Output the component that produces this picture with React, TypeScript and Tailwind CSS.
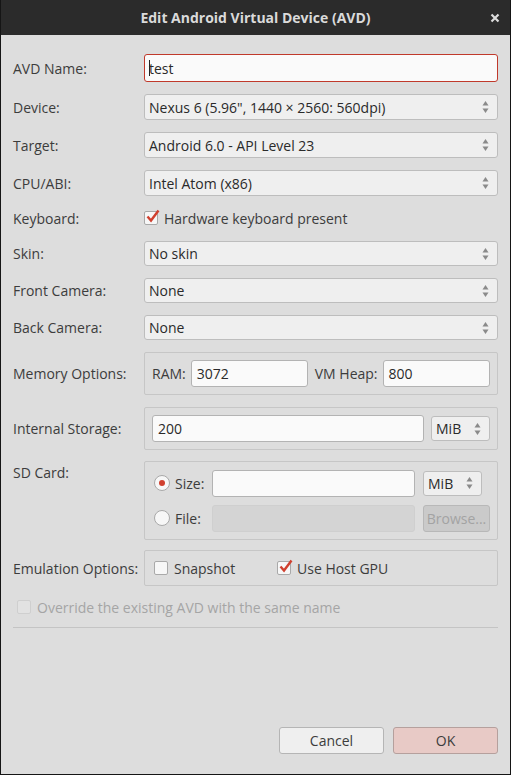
import React from "react";

const font = { fontFamily: '"Open Sans", "Noto Sans", sans-serif' };

function Arrows() {
  return (
    <svg width="7" height="14" viewBox="0 0 7 14" className="shrink-0">
      <path d="M3.5 1 L6.5 5.5 L0.5 5.5 Z" fill="#8a8a8a" />
      <path d="M3.5 13 L6.5 8.5 L0.5 8.5 Z" fill="#8a8a8a" />
    </svg>
  );
}

function Select({ value, className = "" }: { value: string; className?: string }) {
  return (
    <div
      className={`flex items-center justify-between rounded-[3px] border border-[#bdbdbd] bg-[#efefef] pl-[4px] pr-[8px] text-[14px] text-[#2a2a2a] ${className}`}
    >
      <span>{value}</span>
      <Arrows />
    </div>
  );
}

function Input({ value, className = "" }: { value: string; className?: string }) {
  return (
    <div
      className={`flex items-center rounded-[3px] border border-[#b3b3b3] bg-[#fafafa] px-[5px] text-[14px] text-[#2a2a2a] ${className}`}
    >
      {value}
    </div>
  );
}

function Check({ checked, disabled = false }: { checked: boolean; disabled?: boolean }) {
  return (
    <div className="relative h-[14px] w-[14px] shrink-0">
      <div
        className={`absolute inset-0 rounded-[2px] border ${
          disabled ? "border-[#cfcfcf] bg-[#e2e2e2]" : "border-[#a9a9a9] bg-[#f7f7f7]"
        }`}
      />
      {checked && (
        <svg width="16" height="16" viewBox="0 0 16 16" className="absolute left-[1px] top-[-3px]">
          <path d="M2.5 8.5 L6 12.5 L13.5 2.5" stroke="#d0402f" strokeWidth="2.4" fill="none" />
        </svg>
      )}
    </div>
  );
}

function Radio({ checked }: { checked: boolean }) {
  return (
    <div className="flex h-[16px] w-[16px] shrink-0 items-center justify-center rounded-full border border-[#a9a9a9] bg-[#f7f7f7]">
      {checked && <div className="h-[6px] w-[6px] rounded-full bg-[#d0402f]" />}
    </div>
  );
}

function Label({ children }: { children: React.ReactNode }) {
  return <div className="w-[131px] shrink-0 text-[14px] text-[#3c3c3c]">{children}</div>;
}

export default function App() {
  return (
    <div
      style={font}
      className="flex h-[775px] w-[511px] flex-col border-x border-b border-[#151515] bg-[#dddddd]"
    >
      <div className="relative flex h-[35px] shrink-0 items-center justify-center bg-[#2b2b2b] text-[14px] font-bold text-[#dadada]">
        Edit Android Virtual Device (AVD)
        <svg width="10" height="10" viewBox="0 0 10 10" className="absolute right-[10px] top-[13px]">
          <path d="M1.5 1.5 L8.5 8.5 M8.5 1.5 L1.5 8.5" stroke="#dcdcdc" strokeWidth="2.2" />
        </svg>
      </div>

      <div className="flex flex-1 flex-col px-[12px]">
        <div className="mt-[19px] flex items-center">
          <Label>AVD Name:</Label>
          <div className="flex h-[28px] flex-1 items-center rounded-[3px] border border-[#c0392b] bg-[#fafafa] px-[4px] text-[14px] text-[#2a2a2a]">
            <span className="mr-[-1px] h-[16px] w-px bg-[#222]" />
            test
          </div>
        </div>

        <div className="mt-[12px] flex items-center">
          <Label>Device:</Label>
          <Select className="h-[26px] flex-1" value={'Nexus 6 (5.96", 1440 × 2560: 560dpi)'} />
        </div>
        <div className="mt-[12px] flex items-center">
          <Label>Target:</Label>
          <Select className="h-[26px] flex-1" value="Android 6.0 - API Level 23" />
        </div>
        <div className="mt-[12px] flex items-center">
          <Label>CPU/ABI:</Label>
          <Select className="h-[26px] flex-1" value="Intel Atom (x86)" />
        </div>

        <div className="mt-[10px] flex h-[24px] items-center">
          <Label>Keyboard:</Label>
          <Check checked />
          <span className="ml-[6px] text-[14px] text-[#3c3c3c]">Hardware keyboard present</span>
        </div>

        <div className="mt-[11px] flex items-center">
          <Label>Skin:</Label>
          <Select className="h-[25px] flex-1" value="No skin" />
        </div>
        <div className="mt-[12px] flex items-center">
          <Label>Front Camera:</Label>
          <Select className="h-[25px] flex-1" value="None" />
        </div>
        <div className="mt-[12px] flex items-center">
          <Label>Back Camera:</Label>
          <Select className="h-[25px] flex-1" value="None" />
        </div>

        <div className="mt-[12px] flex items-center">
          <Label>Memory Options:</Label>
          <div className="flex h-[43px] flex-1 items-center rounded-[2px] border border-[#c6c6c6] pl-[7px] pr-[7px] text-[14px] text-[#3c3c3c]">
            <span>RAM:</span>
            <Input className="ml-[5px] h-[27px] w-[117px]" value="3072" />
            <span className="ml-[7px]">VM Heap:</span>
            <Input className="ml-[5px] h-[27px] flex-1" value="800" />
          </div>
        </div>

        <div className="mt-[12px] flex items-center">
          <Label>Internal Storage:</Label>
          <div className="flex h-[43px] flex-1 items-center rounded-[2px] border border-[#c6c6c6] pl-[7px] pr-[7px]">
            <Input className="h-[27px] flex-1" value="200" />
            <Select className="ml-[7px] h-[25px] w-[59px]" value="MiB" />
          </div>
        </div>

        <div className="mt-[11px] flex items-start">
          <div className="pt-[1px]">
            <Label>SD Card:</Label>
          </div>
          <div className="flex h-[79px] flex-1 flex-col justify-center gap-[8px] rounded-[2px] border border-[#c6c6c6] pl-[9px] pr-[7px] text-[14px] text-[#3c3c3c]">
            <div className="flex items-center">
              <Radio checked />
              <span className="ml-[5px] w-[37px]">Size:</span>
              <Input className="h-[27px] w-[203px]" value="" />
              <Select className="ml-[8px] h-[25px] w-[59px]" value="MiB" />
            </div>
            <div className="flex items-center">
              <Radio checked={false} />
              <span className="ml-[5px] w-[37px]">File:</span>
              <div className="h-[27px] w-[203px] rounded-[3px] border border-[#cfcfcf] bg-[#d4d4d4]" />
              <div className="ml-[8px] flex h-[27px] flex-1 items-center justify-center rounded-[3px] border border-[#b8b8b8] bg-[#cacaca] text-[14px] text-[#a3a3a3]">
                Browse...
              </div>
            </div>
          </div>
        </div>

        <div className="mt-[10px] flex items-center">
          <Label>Emulation Options:</Label>
          <div className="flex h-[36px] flex-1 items-center rounded-[2px] border border-[#c6c6c6] pl-[9px] text-[14px] text-[#3c3c3c]">
            <Check checked={false} />
            <span className="ml-[6px] w-[103px]">Snapshot</span>
            <Check checked />
            <span className="ml-[6px]">Use Host GPU</span>
          </div>
        </div>

        <div className="mt-[11px] flex h-[20px] items-center pl-[4px] text-[14px] text-[#a5a5a5]">
          <Check checked={false} disabled />
          <span className="ml-[6px]">Override the existing AVD with the same name</span>
        </div>

        <div className="mt-[10px] h-px bg-[#c4c4c4]" />

        <div className="mb-[20px] mt-auto flex justify-end gap-[9px]">
          <div className="flex h-[27px] w-[105px] items-center justify-center rounded-[3px] border border-[#b5b5b5] bg-[#efefef] text-[14px] text-[#3c3c3c]">
            Cancel
          </div>
          <div className="flex h-[27px] w-[105px] items-center justify-center rounded-[3px] border border-[#b5a09d] bg-[#e8cac6] text-[14px] text-[#3c3c3c]">
            OK
          </div>
        </div>
      </div>
    </div>
  );
}
